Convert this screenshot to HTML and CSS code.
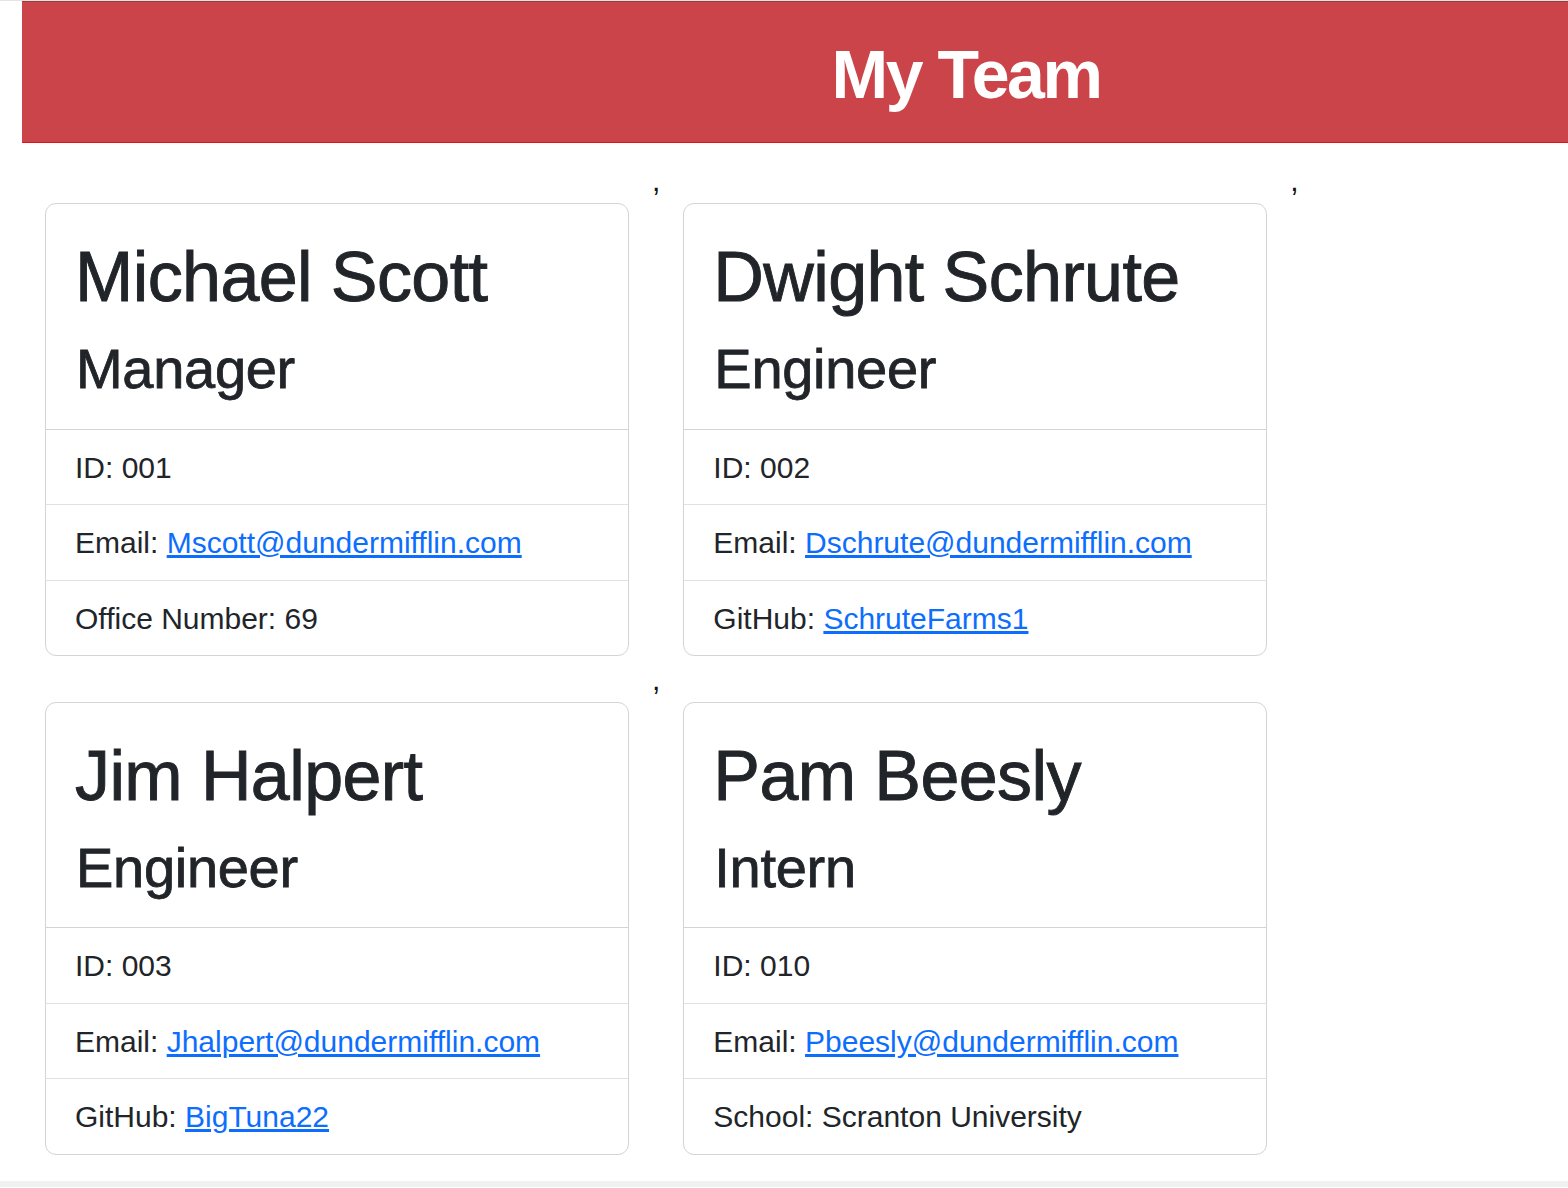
FILE: index.html
```html
<!DOCTYPE html>
<html lang="en">
<head>
<meta charset="UTF-8">
<title>My Team</title>
<link rel="stylesheet" href="styles.css">
</head>
<body>
<div class="topline"></div>
<header class="banner"><h1 class="banner-title">My Team</h1></header>
<main class="team"><div class="card">
    <div class="card-header">
      <h2 class="card-name">Michael Scott</h2>
      <h3 class="card-role">Manager</h3>
    </div>
    <ul class="card-list">
      <li class="card-item">ID: 001</li>
      <li class="card-item">Email: <a class="card-link" href="#">Mscott@dundermifflin.com</a></li>
      <li class="card-item">Office Number: 69</li>
    </ul>
  </div>,<div class="card">
    <div class="card-header">
      <h2 class="card-name">Dwight Schrute</h2>
      <h3 class="card-role">Engineer</h3>
    </div>
    <ul class="card-list">
      <li class="card-item">ID: 002</li>
      <li class="card-item">Email: <a class="card-link" href="#">Dschrute@dundermifflin.com</a></li>
      <li class="card-item">GitHub: <a class="card-link" href="#">SchruteFarms1</a></li>
    </ul>
  </div>,<div class="card">
    <div class="card-header">
      <h2 class="card-name">Jim Halpert</h2>
      <h3 class="card-role">Engineer</h3>
    </div>
    <ul class="card-list">
      <li class="card-item">ID: 003</li>
      <li class="card-item">Email: <a class="card-link" href="#">Jhalpert@dundermifflin.com</a></li>
      <li class="card-item">GitHub: <a class="card-link" href="#">BigTuna22</a></li>
    </ul>
  </div>,<div class="card">
    <div class="card-header">
      <h2 class="card-name">Pam Beesly</h2>
      <h3 class="card-role">Intern</h3>
    </div>
    <ul class="card-list">
      <li class="card-item">ID: 010</li>
      <li class="card-item">Email: <a class="card-link" href="#">Pbeesly@dundermifflin.com</a></li>
      <li class="card-item">School: Scranton University</li>
    </ul>
  </div></main>
<div class="bottombar"></div>
</body>
</html>
```
FILE: styles.css
```css
* {
  box-sizing: border-box;
}

html, body {
  margin: 0;
  padding: 0;
  background: #ffffff;
  overflow: hidden;
}

body {
  font-family: "Liberation Sans", Arial, sans-serif;
  font-size: 30px;
  line-height: 45px;
  color: #212529;
}

.topline {
  height: 1px;
  background: #e4e4e4;
}

.banner {
  margin-left: 22px;
  height: 142px;
  background: #cb444a;
  border-top: 1px solid #9c3a3e;
  border-bottom: 1px solid #e0141c;
  display: flex;
  justify-content: center;
  padding: 31px 0 0 342px;
}

.banner-title {
  margin: 0;
  color: #ffffff;
  font-size: 68px;
  line-height: 82px;
  font-weight: 700;
  letter-spacing: -2.4px;
}

.team {
  display: flex;
  flex-wrap: wrap;
  align-items: flex-start;
  padding: 15px 0 26px 22px;
  color: #111;
}

.card {
  width: 584px;
  margin: 45px 23px 0.5px 23px;
  border: 1px solid #d4d4d6;
  border-radius: 11px;
  background: #fff;
  color: #212529;
  overflow: hidden;
}

.card-header {
  padding: 31px 30px 11.5px 30px;
  border-bottom: 1px solid #d4d4d6;
}

.card-name {
  margin: 0 0 16px -1px;
  font-size: 70px;
  line-height: 84px;
  font-weight: 400;
  letter-spacing: -0.6px;
  -webkit-text-stroke: 0.9px #212529;
}

.card-role {
  margin: 0 0 15px 0;
  font-size: 56px;
  line-height: 67.2px;
  font-weight: 400;
  letter-spacing: -0.3px;
  -webkit-text-stroke: 0.8px #212529;
}

.card-list {
  list-style: none;
  margin: 0;
  padding: 0;
}

.card-item {
  padding: 15px 28px 14.5px 29px;
  line-height: 45px;
  border-top: 1px solid #dee2e6;
}

.card-item:first-child {
  border-top: none;
}

.card-link {
  color: #0d6efd;
  text-decoration: underline;
}

.bottombar {
  height: 6px;
  background: #f0f1f3;
}
```
